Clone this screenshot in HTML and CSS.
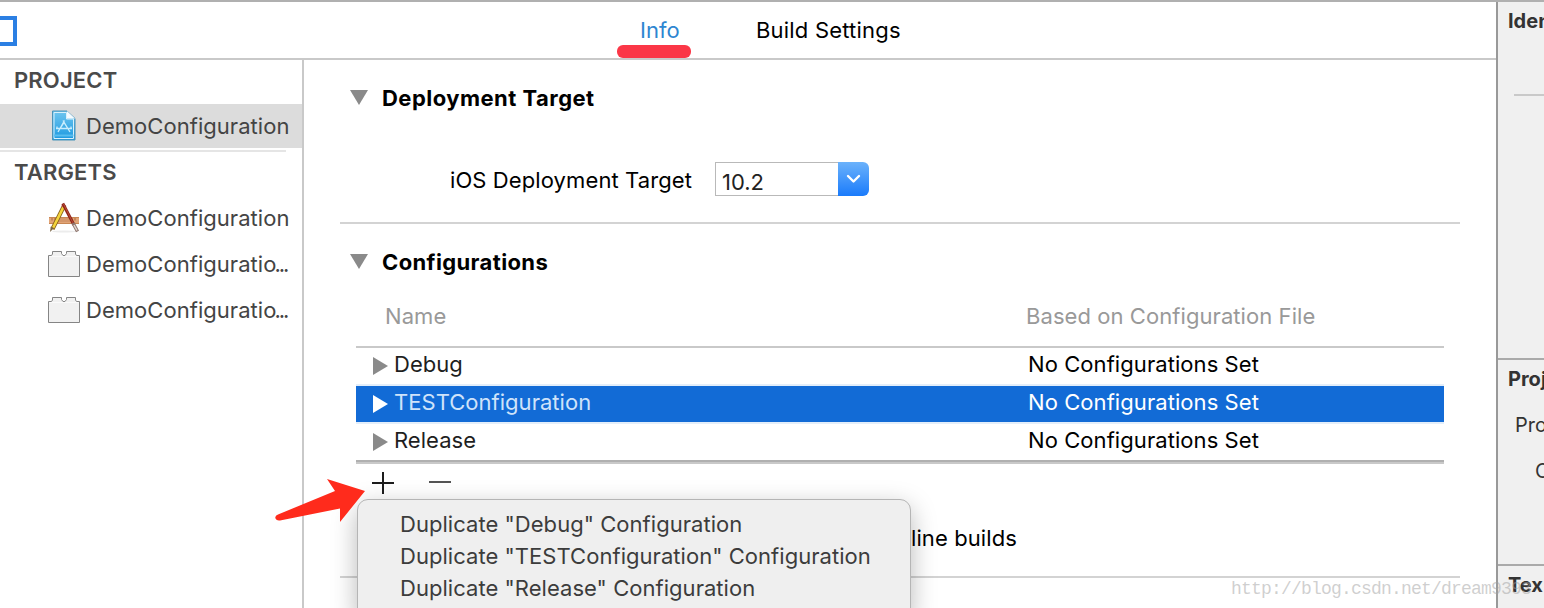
FILE: index.html
```html
<!DOCTYPE html>
<html lang="en">
<head>
<meta charset="utf-8">
<title>DemoConfiguration</title>
<link rel="stylesheet" href="styles.css">
</head>
<body>
<div class="window">
  <div class="editor">
    <header class="tabbar">
      <span class="outline-toggle"></span>
      <span class="tab tab-active">Info</span>
      <span class="tab tab-build">Build Settings</span>
    </header>
    <div class="body">
      <aside class="sidebar">
        <h2 class="group">PROJECT</h2>
        <div class="item selected">
          <svg class="icon" width="32" height="32" viewBox="0 0 32 32">
            <defs><linearGradient id="doc" x1="0" y1="0" x2="0" y2="1"><stop offset="0" stop-color="#6fc6ef"/><stop offset="1" stop-color="#1b98e0"/></linearGradient></defs>
            <path d="M4.500 1H19L27 8.500V30H4.500Z" fill="url(#doc)" stroke="#4b93b8" stroke-width="1"/>
            <path d="M6 2.500H18.500V9H25.500V28.500H6Z" fill="none" stroke="#d8f1fc" stroke-width="1"/>
            <path d="M19 1L27 8.500H19Z" fill="#f4fbff"/>
            <path d="M16.500 10.500L10 22M15 10.500L22 22M8 18.500H24M9 16.500V19M23 16.500V19M12.500 18L16 12.500L19.500 18" fill="none" stroke="#c8edfd" stroke-width="1.300"/>
            <path d="M6 25.500H25.500" stroke="#58bdef" stroke-width="2"/>
          </svg>
          <span>DemoConfiguration</span>
        </div>
        <div class="rule"></div>
        <h2 class="group targets">TARGETS</h2>
        <div class="item">
          <svg class="icon" width="32" height="32" viewBox="0 0 32 32">
            <ellipse cx="16" cy="29.500" rx="12" ry="1" fill="#ececec"/>
            <path d="M1 15H31V22H1Z" fill="#e2a577"/>
            <path d="M1 15.500H31M1 21.500H31" stroke="#c88754" stroke-width="1"/>
            <path d="M4 16V18.500M7 16V18.500M24 16V18.500M27 16V18.500" stroke="#a8683c" stroke-width="1"/>
            <path d="M10 18H22" stroke="#d4966a" stroke-width="4"/>
            <path d="M16.500 3L4.500 27" stroke="#86601c" stroke-width="4.200"/>
            <path d="M15.500 5L5 26" stroke="#f4d43c" stroke-width="2.600"/>
            <path d="M14 3L17 4.500" stroke="#c9655d" stroke-width="3"/>
            <path d="M2 30L2.800 24.500L6 26Z" fill="#7a6545"/>
            <path d="M14.800 1.500L26 23" stroke="#8e2217" stroke-width="3"/>
            <path d="M15.500 2L25 21" stroke="#c75b43" stroke-width=".8"/>
            <path d="M25 21L29.500 29.500" stroke="#8f7770" stroke-width="3.400"/>
            <path d="M26 23L29 28.500" stroke="#e4d8d2" stroke-width="1.500"/>
          </svg>
          <span>DemoConfiguration</span>
        </div>
        <div class="item">
          <svg class="icon" width="32" height="32" viewBox="0 0 32 32">
            <path d="M.500 28.500V7.500H3.500L4.500 6V3.500H13.500V5.500L15 7.500H17L18.500 5.500V3.500H27.500V6L28.500 7.500H31.500V28.500Z" fill="#f1f1f1" stroke="#858585"/>
            <path d="M1.500 8.500H30.500" stroke="#fafafa"/>
          </svg>
          <span>DemoConfiguratio<span class="dots">...</span></span>
        </div>
        <div class="item">
          <svg class="icon" width="32" height="32" viewBox="0 0 32 32">
            <path d="M.500 28.500V7.500H3.500L4.500 6V3.500H13.500V5.500L15 7.500H17L18.500 5.500V3.500H27.500V6L28.500 7.500H31.500V28.500Z" fill="#f1f1f1" stroke="#858585"/>
            <path d="M1.500 8.500H30.500" stroke="#fafafa"/>
          </svg>
          <span>DemoConfiguratio<span class="dots">...</span></span>
        </div>
      </aside>
      <main class="content">
        <section class="section deployment">
          <h3 class="title"><svg class="tri" width="18" height="15"><path d="M0 0H18L9 15Z" fill="#8a8a8a"/></svg>Deployment Target</h3>
          <div class="field">
            <label class="label">iOS Deployment Target</label>
            <div class="combo">
              <span class="value">10.2</span>
              <span class="drop"><svg width="15" height="10" viewBox="0 0 15 10"><path d="M2 2L7.500 7.500L13 2" fill="none" stroke="#fff" stroke-width="2.400" stroke-linecap="round" stroke-linejoin="round"/></svg></span>
            </div>
          </div>
        </section>
        <section class="section configs">
          <h3 class="title conf-title"><svg class="tri" width="18" height="15"><path d="M0 0H18L9 15Z" fill="#8a8a8a"/></svg>Configurations</h3>
          <div class="table">
            <div class="row head"><span>Name</span><span>Based on Configuration File</span></div>
            <div class="row"><span class="name"><svg width="15" height="18"><path d="M0 0L15 9L0 18Z" fill="#8a8a8a"/></svg>Debug</span><span class="file">No Configurations Set</span></div>
            <div class="row active"><span class="name"><svg width="15" height="18"><path d="M0 0L15 9L0 18Z" fill="#fff"/></svg>TESTConfiguration</span><span class="file">No Configurations Set</span></div>
            <div class="row"><span class="name"><svg width="15" height="18"><path d="M0 0L15 9L0 18Z" fill="#8a8a8a"/></svg>Release</span><span class="file">No Configurations Set</span></div>
          </div>
          <div class="actions">
            <svg width="22" height="22"><path d="M0 11H22M11 0V22" stroke="#1c1c1c" stroke-width="2"/></svg>
            <svg width="22" height="22"><path d="M0 10H22" stroke="#555" stroke-width="2"/></svg>
          </div>
          <div class="hint">line builds</div>
        </section>
      </main>
    </div>
  </div>
  <aside class="inspector">
    <div class="pane identity"><h4>Iden</h4><div class="line"></div></div>
    <div class="pane project"><h4>Proj</h4><p>Pro</p><p class="org">O</p></div>
    <div class="pane text"><h4>Tex</h4></div>
  </aside>
  <div class="underline"></div>
  <div class="menu">
    <div>Duplicate "Debug" Configuration</div>
    <div>Duplicate "TESTConfiguration" Configuration</div>
    <div>Duplicate "Release" Configuration</div>
  </div>
  <svg class="arrow" width="94" height="46" viewBox="0 0 94 46"><path d="M92 13L54 1L62 13L5 36.500Q1.500 38 2.500 40.500Q3.500 43 7 42.500L67 30.500V44Z" fill="#ff2b1c"/></svg>
  <div class="watermark">http://blog.csdn.net/dream9393</div>
</div>
</body>
</html>
```

FILE: styles.css
```css
* { box-sizing: border-box; }
body { margin: 0; font: 22px/32px Inter, "Liberation Sans", sans-serif; letter-spacing: .04px; background: #fff; color: #000; white-space: nowrap; }
h2, h3, h4, p { margin: 0; font-size: inherit; }
svg { display: block; flex: none; }
.window { position: relative; display: flex; width: 1544px; height: 608px; overflow: hidden; border-top: 2px solid #b0b0b0; }
.editor { width: 1496px; display: flex; flex-direction: column; }

.tabbar { display: flex; height: 58px; padding-top: 12px; border-bottom: 2px solid #c9c9c9; }
.outline-toggle { width: 17px; height: 30px; margin-top: 2px; border: 4px solid #2b7fe3; border-left: 0; }
.tab-active { width: 56px; margin-left: 623px; color: #2e86d1; letter-spacing: 0; }
.tab-build { padding-left: 60px; letter-spacing: .2px; }

.body { display: flex; flex: 1; }
.sidebar { width: 304px; border-right: 2px solid #c9c9c9; color: #444; }
.group { height: 44px; padding-left: 14px; line-height: 40px; font-weight: 600; letter-spacing: .15px; color: #4a4a4a; }
.item { display: flex; align-items: center; gap: 6px; height: 46px; padding-left: 48px; }
.selected { height: 44px; background: #dcdcdc; }
.rule { width: 286px; height: 2px; margin-top: 2px; background: #e5e5e5; }
.targets { height: 43px; }
.dots { margin-left: -2px; letter-spacing: -2px; }

.content { flex: 1; padding: 0 36px; }
.section { border-bottom: 2px solid #d3d3d3; }
.deployment { height: 164px; padding-top: 22px; }
.configs { height: 354px; padding-top: 22px; }
.title { display: flex; padding-left: 10px; font-weight: 700; letter-spacing: .47px; }
.conf-title { letter-spacing: .37px; }
.tri { margin: 8px 14px 0 0; }
.field { display: flex; align-items: center; margin-top: 48px; padding-left: 110px; height: 34px; }
.label { width: 265px; margin-top: 2px; letter-spacing: .1px; }
.combo { display: flex; width: 154px; height: 34px; }
.value { width: 123px; padding: 4px 0 0 6px; border: 1px solid #b9b9b9; border-right: 0; line-height: 30px; letter-spacing: 0; color: #222; }
.drop { display: flex; width: 31px; align-items: center; justify-content: center; border-radius: 0 6px 6px 0; background: linear-gradient(#6bb2fb, #1a7bfb); }

.table { margin: 22px 16px 0; border-bottom: 2px solid #c9c9c9; box-shadow: inset 0 -2px #b0b0b0; }
.row { display: grid; grid-template-columns: 672px 1fr; height: 38px; line-height: 32px; border-bottom: 2px solid transparent; }
.head { height: 48px; padding-left: 29px; grid-template-columns: 641px 1fr; line-height: 32px; color: #999; border-bottom: 2px solid #c9c9c9; letter-spacing: .07px; }
.name { display: flex; padding-left: 17px; gap: 6px; color: #1e1e1e; letter-spacing: .03px; }
.name svg { margin-top: 9px; }
.file { letter-spacing: .07px; }
.active { background: #126bd6; background-clip: padding-box; border-bottom-color: #e3eefa; color: #fff; box-shadow: 0 -2px #e3eefa; }
.active .name { color: #cfe3fa; }
.actions { display: flex; gap: 35px; margin: 8px 0 0 32px; }
.hint { margin: 28px 0 0 571px; letter-spacing: .1px; }

.inspector { width: 48px; overflow: hidden; border-left: 2px solid #999; background: #f0f0f0; font-size: 20px; line-height: 24px; color: #333; letter-spacing: 0; }
.pane { padding-left: 10px; border-bottom: 2px solid #aaa; overflow: hidden; }
.pane h4 { font-weight: 700; }
.identity { height: 358px; padding-top: 7px; }
.line { height: 2px; margin: 61px 0 0 6px; background: #c9c9c9; }
.project { height: 206px; padding-top: 7px; }
.project p { margin: 22px 0 0 7px; }
.project .org { margin-left: 27px; }
.text { height: 60px; padding-top: 7px; border: 0; }

.underline { position: absolute; left: 617px; top: 43px; width: 74px; height: 13px; border-radius: 6px; background: #fb3747; }
.menu { position: absolute; left: 357px; top: 497px; width: 554px; height: 120px; padding: 8px 0 0 42px; border: 1px solid #b5b5b5; border-radius: 11px; background: #efefef; color: #3c3c3c; box-shadow: 0 8px 26px rgba(0,0,0,.28); }
.arrow { position: absolute; left: 273px; top: 476px; }
.watermark { position: absolute; left: 1231px; top: 574px; font: 18px/26px "Liberation Mono", monospace; letter-spacing: -.8px; color: rgba(160,160,160,.5); }
```
